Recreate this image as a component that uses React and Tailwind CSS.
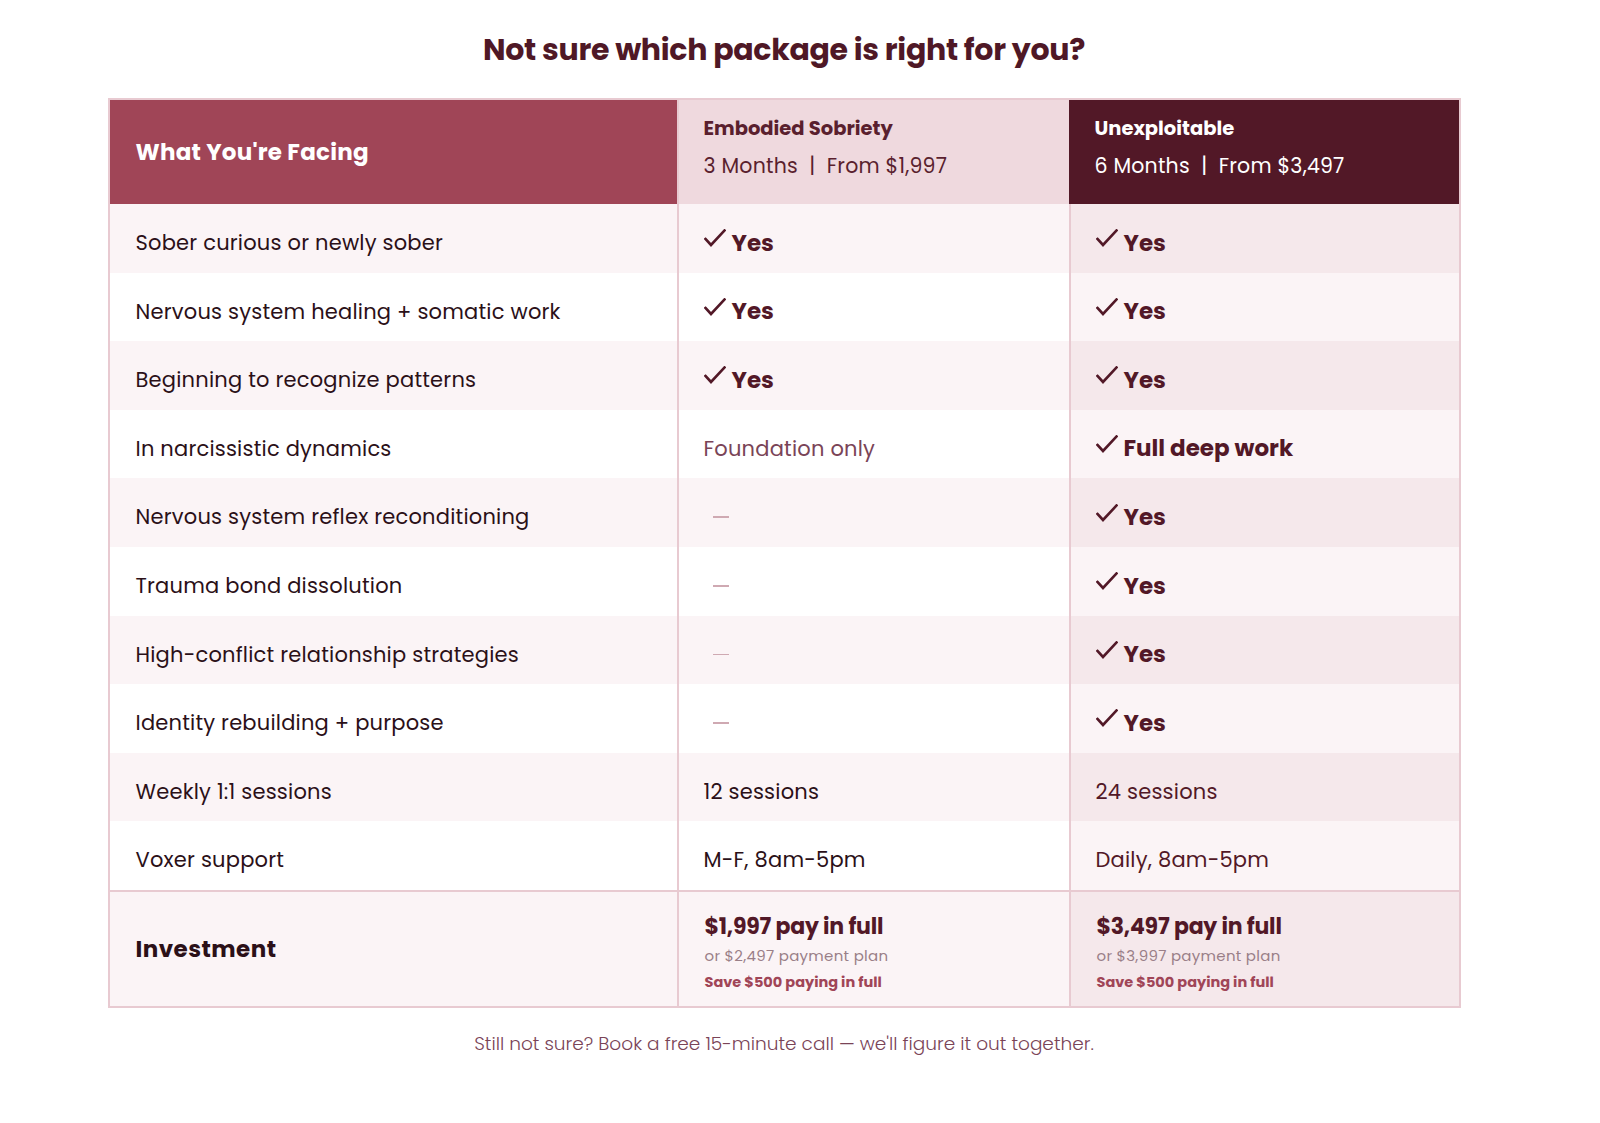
import React from 'react';

const font = { fontFamily: 'Poppins, Inter, "Noto Sans", sans-serif' };

const rows = [
  { label: 'Sober curious or newly sober', mid: 'yes', right: 'Yes' },
  { label: 'Nervous system healing + somatic work', mid: 'yes', right: 'Yes' },
  { label: 'Beginning to recognize patterns', mid: 'yes', right: 'Yes' },
  { label: 'In narcissistic dynamics', mid: 'foundation', right: 'Full deep work' },
  { label: 'Nervous system reflex reconditioning', mid: 'none', right: 'Yes' },
  { label: 'Trauma bond dissolution', mid: 'none', right: 'Yes' },
  { label: 'High-conflict relationship strategies', mid: 'none', right: 'Yes' },
  { label: 'Identity rebuilding + purpose', mid: 'none', right: 'Yes' },
  { label: 'Weekly 1:1 sessions', mid: '12 sessions', right: '24 sessions', plain: true },
  { label: 'Voxer support', mid: 'M-F, 8am-5pm', right: 'Daily, 8am-5pm', plain: true }
];

const Check = () => (
  <svg width="22" height="19" viewBox="0 0 22 19" className="mr-[6px] -mt-[8px] shrink-0">
    <polyline points="1.5,10 7,16 20.5,1.5" fill="none" stroke="#521827" strokeWidth="2.6" strokeLinecap="square" />
  </svg>
);

const YesCell = ({ text }) => (
  <div className="flex items-center">
    <Check />
    <span className="text-[23px] font-bold text-[#521827]">{text}</span>
  </div>
);

const MidCell = ({ row }) => {
  if (row.plain) return <span className="text-[21px] text-[#2b1018] tracking-[0.01em]">{row.mid}</span>;
  if (row.mid === 'yes') return <YesCell text="Yes" />;
  if (row.mid === 'foundation') return <span className="text-[21px] text-[#7a4457] tracking-[0.01em]">Foundation only</span>;
  return <span className="ml-[9px] block w-[16px] h-[1.5px] bg-[#cfa9b2]" />;
};

const App = () => {
  return (
    <div className="w-[1568px] bg-white pt-[30px] pb-[50px]" style={font}>
      <h2 className="text-center text-[30px] font-bold text-[#4f1826] tracking-[-0.01em] leading-[40px]">
        Not sure which package is right for you?
      </h2>

      <div className="mx-auto mt-[28px] w-[1353px] border-2 border-[#e8cad1]">
        {/* header */}
        <div className="grid grid-cols-[567px_392px_1fr] h-[104px]">
          <div className="bg-[#a04557] flex items-center pl-[26px]">
            <span className="text-[23px] font-bold text-white tracking-[0.01em]">What You're Facing</span>
          </div>
          <div className="bg-[#efd9de] border-l-2 border-[#e8cad1] pl-[25px] pt-[16px]">
            <div className="text-[19.5px] font-bold text-[#5a1f2e] leading-[26px]">Embodied Sobriety</div>
            <div className="text-[20.5px] text-[#5a1f2e] leading-[30px] mt-[9px] tracking-[0.01em]">
              3 Months&nbsp; | &nbsp;From $1,997
            </div>
          </div>
          <div className="bg-[#521827] pl-[26px] pt-[16px]">
            <div className="text-[19.5px] font-bold text-white leading-[26px]">Unexploitable</div>
            <div className="text-[20.5px] text-white leading-[30px] mt-[9px] tracking-[0.01em]">
              6 Months&nbsp; | &nbsp;From $3,497
            </div>
          </div>
        </div>

        {/* rows */}
        {rows.map((row, i) => {
          const odd = i % 2 === 0;
          return (
            <div key={row.label} className="grid grid-cols-[567px_392px_1fr] h-[68.6px]">
              <div className={`${odd ? 'bg-[#fbf4f6]' : 'bg-white'} flex items-center pl-[26px] pt-[9px]`}>
                <span className="text-[21px] text-[#2b1018] tracking-[0.01em]">{row.label}</span>
              </div>
              <div className={`${odd ? 'bg-[#fbf4f6]' : 'bg-white'} border-l-2 border-[#e8cad1] flex items-center pl-[25px] pt-[9px]`}>
                <MidCell row={row} />
              </div>
              <div className={`${odd ? 'bg-[#f5e8eb]' : 'bg-[#fbf4f6]'} border-l-2 border-[#e8cad1] flex items-center pl-[25px] pt-[9px]`}>
                {row.plain ? (
                  <span className="text-[21px] text-[#521827] tracking-[0.01em]">{row.right}</span>
                ) : (
                  <YesCell text={row.right} />
                )}
              </div>
            </div>
          );
        })}

        {/* investment */}
        <div className="grid grid-cols-[567px_392px_1fr] h-[116px] border-t-2 border-[#e8cad1]">
          <div className="bg-[#fbf4f6] flex items-center pl-[26px]">
            <span className="text-[23px] font-bold text-[#2b1018] tracking-[0.02em]">Investment</span>
          </div>
          <div className="bg-[#fbf4f6] border-l-2 border-[#e8cad1] pl-[26px] pt-[20px]">
            <div className="text-[22px] font-bold text-[#521827] leading-[30px] tracking-[-0.01em]">$1,997 pay in full</div>
            <div className="text-[15px] text-[#9a7f88] leading-[22px] mt-[3px] tracking-[0.02em]">or $2,497 payment plan</div>
            <div className="text-[14.5px] font-bold text-[#a04557] leading-[20px] mt-[5px]">Save $500 paying in full</div>
          </div>
          <div className="bg-[#f5e8eb] border-l-2 border-[#e8cad1] pl-[26px] pt-[20px]">
            <div className="text-[22px] font-bold text-[#521827] leading-[30px] tracking-[-0.01em]">$3,497 pay in full</div>
            <div className="text-[15px] text-[#9a7f88] leading-[22px] mt-[3px] tracking-[0.02em]">or $3,997 payment plan</div>
            <div className="text-[14.5px] font-bold text-[#a04557] leading-[20px] mt-[5px]">Save $500 paying in full</div>
          </div>
        </div>
      </div>

      <p className="mt-[22px] text-center text-[18.5px] font-light text-[#7a4457] leading-[28px]">
        Still not sure? Book a free 15-minute call — we'll figure it out together.
      </p>
    </div>
  );
};

export default App;
